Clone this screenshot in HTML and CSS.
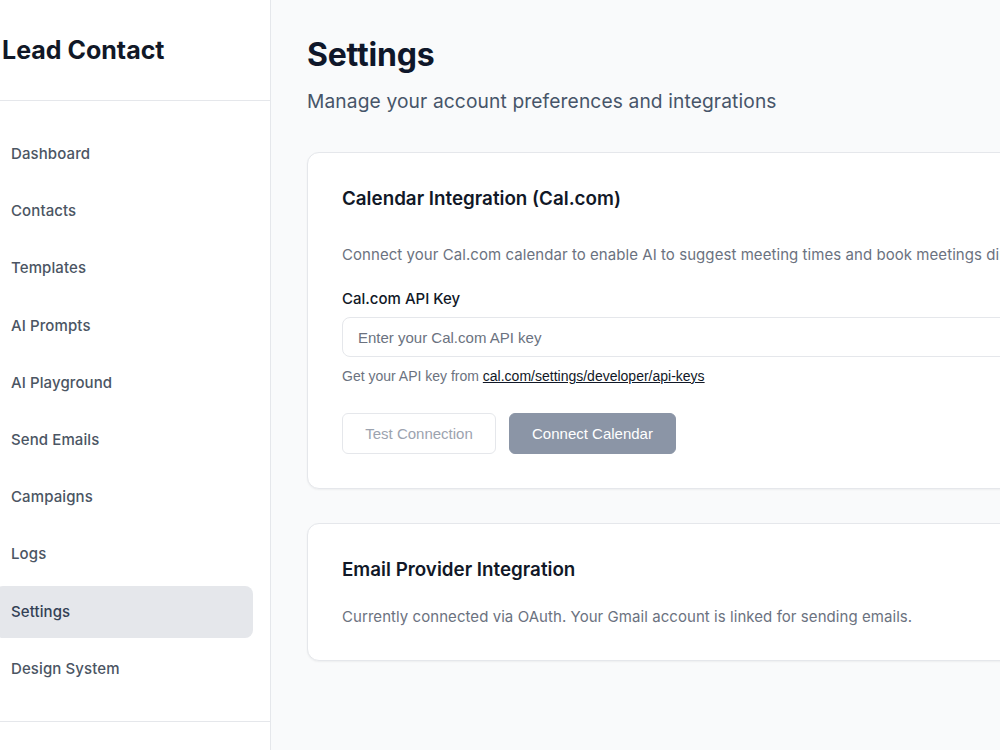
FILE: index.html
```html
<!DOCTYPE html>
<html lang="en">
<head>
<meta charset="utf-8">
<title>Settings - Lead Contact</title>
<link rel="stylesheet" href="styles.css">
</head>
<body>
<div class="layout">
  <aside class="sidebar">
    <div class="brand">Lead Contact</div>
    <nav class="nav">
      <a class="nav-item">Dashboard</a>
      <a class="nav-item">Contacts</a>
      <a class="nav-item">Templates</a>
      <a class="nav-item">AI Prompts</a>
      <a class="nav-item">AI Playground</a>
      <a class="nav-item">Send Emails</a>
      <a class="nav-item">Campaigns</a>
      <a class="nav-item">Logs</a>
      <a class="nav-item active">Settings</a>
      <a class="nav-item">Design System</a>
    </nav>
    <div class="sidebar-footer"></div>
  </aside>
  <main class="main">
    <h1 class="page-title">Settings</h1>
    <p class="page-sub">Manage your account preferences and integrations</p>

    <section class="card card-cal">
      <h2 class="card-title">Calendar Integration (Cal.com)</h2>
      <p class="card-desc">Connect your Cal.com calendar to enable AI to suggest meeting times and book meetings directly from your emails.</p>
      <label class="field-label">Cal.com API Key</label>
      <input class="field-input" type="password" placeholder="Enter your Cal.com API key">
      <p class="field-help">Get your API key from <a class="help-link">cal.com/settings/developer/api-keys</a></p>
      <div class="actions">
        <button class="btn btn-outline" disabled>Test Connection</button>
        <button class="btn btn-primary" disabled>Connect Calendar</button>
      </div>
    </section>

    <section class="card card-email">
      <h2 class="card-title">Email Provider Integration</h2>
      <p class="card-desc">Currently connected via OAuth. Your Gmail account is linked for sending emails.</p>
    </section>
  </main>
</div>
</body>
</html>
```

FILE: styles.css
```css
* { box-sizing: border-box; }

html, body {
  margin: 0;
  padding: 0;
  overflow: hidden;
  height: 750px;
}

body {
  font-family: Inter, "Noto Sans", sans-serif;
  color: #0f172a;
  background: #f9fafb;
}

.layout {
  display: flex;
  width: 1400px;
  min-height: 750px;
}

.sidebar {
  width: 271px;
  flex: none;
  background: #ffffff;
  border-right: 1px solid #e5e7eb;
  display: flex;
  flex-direction: column;
}

.brand {
  height: 101px;
  border-bottom: 1px solid #e5e7eb;
  padding-left: 2px;
  display: flex;
  align-items: center;
  font-size: 25px;
  font-weight: 700;
  color: #111827;
}

.nav {
  display: flex;
  flex-direction: column;
  gap: 5px;
  padding: 27px 17px 26px 0;
  margin-left: -5px;
  border-bottom: 1px solid #e5e7eb;
}

.nav-item {
  display: block;
  padding: 14px 16px;
  line-height: 24.2px;
  font-size: 15px;
  font-weight: 500;
  letter-spacing: 0.1px;
  color: #4b5563;
  border-radius: 8px;
  cursor: pointer;
}

.nav-item.active {
  background: #e5e7eb;
  color: #334155;
}

.sidebar-footer {
  height: 60px;
}

.main {
  flex: 1;
  padding: 35px 36px 40px 36px;
}

.page-title {
  margin: 0;
  font-size: 32px;
  line-height: 40px;
  font-weight: 700;
  color: #0f172a;
  letter-spacing: -0.2px;
}

.page-sub {
  margin: 12px 0 0;
  font-size: 19.2px;
  line-height: 28px;
  letter-spacing: 0.12px;
  color: #475569;
}

.card {
  background: #ffffff;
  border: 1px solid #e5e7eb;
  border-radius: 12px;
  box-shadow: 0 1px 2px rgba(0, 0, 0, 0.05);
  padding: 33px 35px 34px 34px;
}

.card-cal {
  margin-top: 37px;
}

.card-email {
  margin-top: 34px;
  padding-bottom: 31px;
}

.card-title {
  margin: 0;
  font-size: 18.8px;
  line-height: 26px;
  font-weight: 600;
  color: #111827;
}

.card-desc {
  margin: 31px 0 0;
  font-size: 15px;
  line-height: 24px;
  letter-spacing: 0.06px;
  color: #6b7280;
  white-space: nowrap;
}

.card-email .card-desc {
  margin-top: 22px;
}

.field-label {
  display: block;
  margin-top: 21px;
  font-size: 15px;
  line-height: 22px;
  font-weight: 500;
  color: #111827;
}

.field-input {
  display: block;
  width: 100%;
  height: 40px;
  margin-top: 7px;
  padding: 0 15px;
  border: 1px solid #e5e7eb;
  border-radius: 8px;
  background: #ffffff;
  font-family: "Liberation Sans", Arial, sans-serif;
  font-size: 15px;
  color: #111827;
  outline: none;
}

.field-input::placeholder {
  color: #6b7280;
}

.field-help {
  margin: 10px 0 0;
  font-family: "Liberation Sans", Arial, sans-serif;
  font-size: 14px;
  line-height: 18px;
  color: #6b7280;
}

.help-link {
  color: #111827;
  text-decoration: underline;
}

.actions {
  display: flex;
  gap: 13px;
  margin-top: 28px;
}

.btn {
  height: 41px;
  padding: 0;
  border-radius: 6px;
  font-family: "Liberation Sans", Arial, sans-serif;
  font-size: 15px;
  white-space: nowrap;
  text-align: center;
}

.btn-outline {
  width: 154px;
  background: #ffffff;
  border: 1px solid #e5e7eb;
  color: #9ca3af;
}

.btn-primary {
  width: 167px;
  background: #8b95a6;
  border: 1px solid #8b95a6;
  color: #ffffff;
}
```
